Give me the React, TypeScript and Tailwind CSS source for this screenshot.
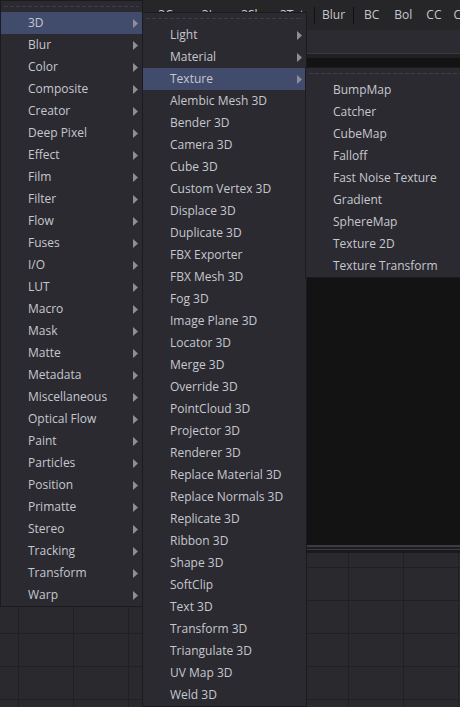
const mainItems = [
  "3D", "Blur", "Color", "Composite", "Creator", "Deep Pixel", "Effect", "Film",
  "Filter", "Flow", "Fuses", "I/O", "LUT", "Macro", "Mask", "Matte", "Metadata",
  "Miscellaneous", "Optical Flow", "Paint", "Particles", "Position", "Primatte",
  "Stereo", "Tracking", "Transform", "Warp",
];

const threeDItems = [
  "Light", "Material", "Texture", "Alembic Mesh 3D", "Bender 3D", "Camera 3D",
  "Cube 3D", "Custom Vertex 3D", "Displace 3D", "Duplicate 3D", "FBX Exporter",
  "FBX Mesh 3D", "Fog 3D", "Image Plane 3D", "Locator 3D", "Merge 3D",
  "Override 3D", "PointCloud 3D", "Projector 3D", "Renderer 3D",
  "Replace Material 3D", "Replace Normals 3D", "Replicate 3D", "Ribbon 3D",
  "Shape 3D", "SoftClip", "Text 3D", "Transform 3D", "Triangulate 3D",
  "UV Map 3D", "Weld 3D",
];

const textureItems = [
  "BumpMap", "Catcher", "CubeMap", "Falloff", "Fast Noise Texture", "Gradient",
  "SphereMap", "Texture 2D", "Texture Transform",
];

const subMenus = ["Light", "Material", "Texture"];

function Arrow() {
  return (
    <svg width="5" height="9" viewBox="0 0 5 9" className="shrink-0">
      <path d="M0 0 L5 4.5 L0 9 Z" fill="#8e8e93" />
    </svg>
  );
}

interface MenuProps {
  items: string[];
  active?: string;
  arrows?: (item: string) => boolean;
  className: string;
}

function Menu({ items, active, arrows, className }: MenuProps) {
  return (
    <div
      className={`absolute bg-[#2b2a31] border border-[#1b1b1f] pt-[11px] ${className}`}
    >
      {/* tear-off line */}
      <div className="absolute left-[3px] right-[3px] top-[5px] h-px bg-[repeating-linear-gradient(to_right,#3e3e44_0_4px,transparent_4px_6px)]" />
      {items.map((item) => (
        <div
          key={item}
          className={`flex items-center h-[22px] pl-[27px] pr-[4px] ${
            item === active ? "bg-[#414b6c]" : ""
          }`}
        >
          <span className="flex-1 whitespace-nowrap">{item}</span>
          {arrows && arrows(item) && <Arrow />}
        </div>
      ))}
    </div>
  );
}

function Sep() {
  return <div className="w-px h-[17px] bg-[#111114] shrink-0" />;
}

export default function App() {
  return (
    <div className="relative w-[460px] h-[707px] overflow-hidden bg-[#29292e] font-['Open_Sans',sans-serif] text-[12px] text-[#c6c8ce]">
      {/* toolbar */}
      <div className="flex items-center h-[30px] bg-[#262629] whitespace-nowrap">
        <div className="w-[314px] shrink-0 flex justify-end gap-[18px] pr-[10px]">
          <span>3Cm</span>
          <span>3Im</span>
          <span>3Sh</span>
          <span>3Txt</span>
        </div>
        <Sep />
        <span className="ml-[7px]">Blur</span>
        <div className="ml-[8px]">
          <Sep />
        </div>
        <span className="ml-[10px]">BC</span>
        <span className="ml-[15px]">Bol</span>
        <span className="ml-[14px]">CC</span>
        <span className="ml-[12px] shrink-0">CS</span>
      </div>

      {/* viewer */}
      <div className="h-[23px] bg-[#2b2b31]" />
      <div className="h-px bg-[#3a3a40]" />
      <div className="h-[4px] bg-[#202024]" />
      <div className="h-[487px] bg-[#131313]" />
      <div className="h-[2px] bg-[#3b3b40]" />
      <div className="h-[2px] bg-[#1d1d21]" />
      <div className="h-px bg-[#3b3b40]" />
      <div className="h-[3px] bg-[#1a1a1e]" />

      {/* node grid */}
      <div className="h-[160px] bg-[#29292e] bg-[linear-gradient(to_right,#212125_1px,transparent_1px),linear-gradient(to_bottom,#212125_1px,transparent_1px)] bg-[size:55px_33px] bg-[position:18px_14px]" />

      <Menu
        items={mainItems}
        active="3D"
        arrows={() => true}
        className="left-0 top-0 w-[143px]"
      />
      <Menu
        items={threeDItems}
        active="Texture"
        arrows={(item) => subMenus.includes(item)}
        className="left-[142px] top-[12px] w-[165px]"
      />
      <Menu
        items={textureItems}
        className="left-[305px] top-[67px] w-[170px]"
      />
    </div>
  );
}
